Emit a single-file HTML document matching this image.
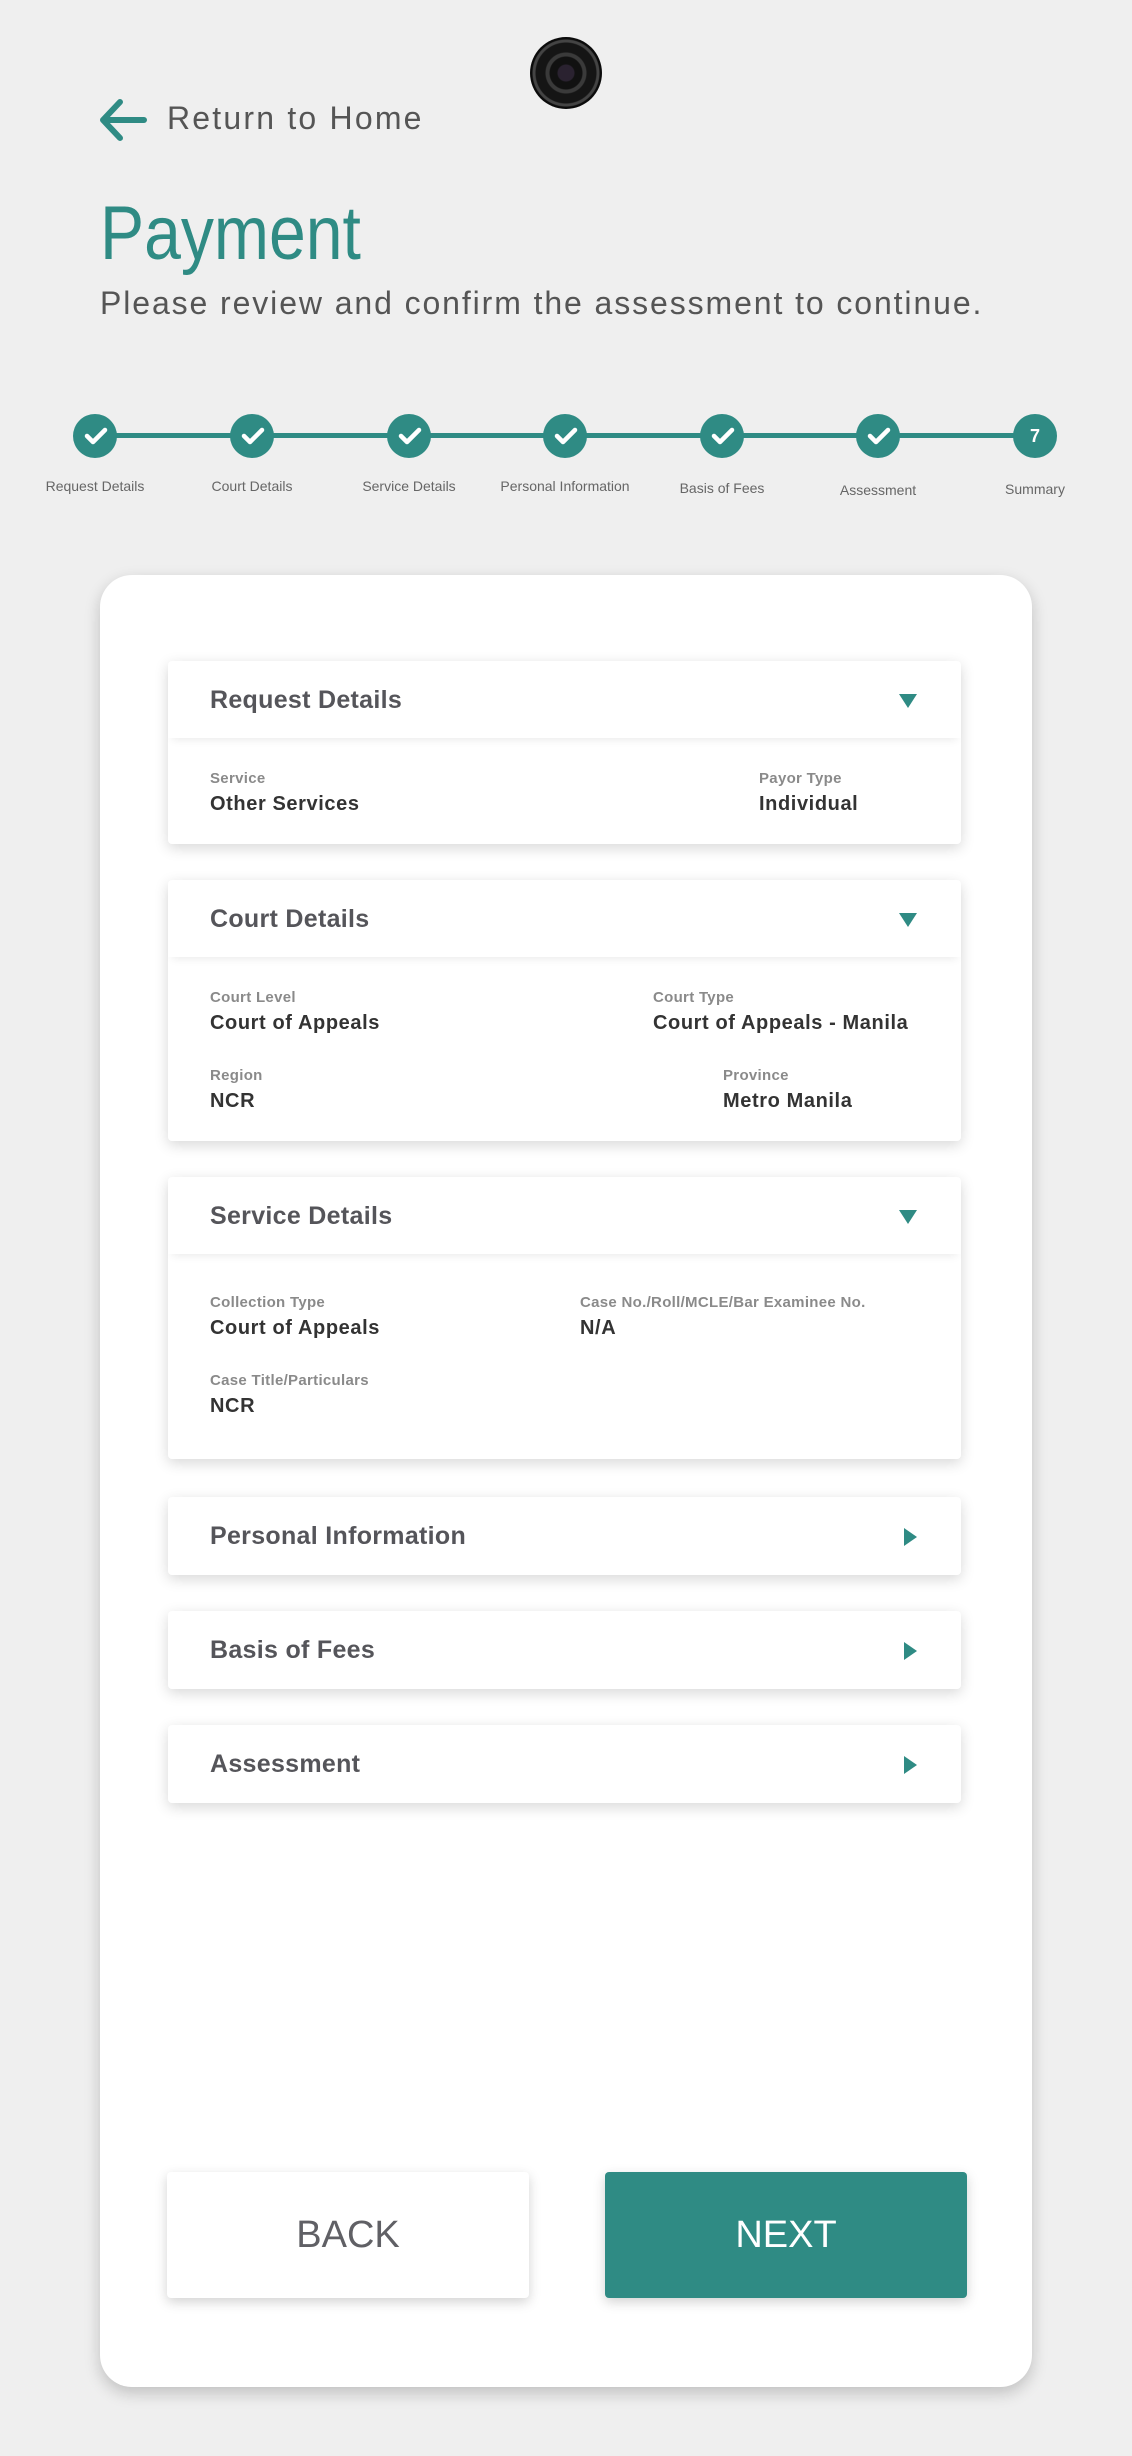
<!DOCTYPE html>
<html><head><meta charset="utf-8"><style>
*{margin:0;padding:0;box-sizing:border-box}
body{width:1132px;height:2456px;background:#efefef;font-family:"Liberation Sans",sans-serif;position:relative;overflow:hidden}
.a{position:absolute}
.teal{color:#2f8b84}
.sec{position:absolute;left:168px;width:793px;background:#fff;border-radius:4px;box-shadow:0 4px 14px rgba(0,0,0,.16)}
.hd{height:77px;position:relative;box-shadow:0 6px 8px -4px rgba(0,0,0,.08)}
.hd span{position:absolute;left:42px;top:25px;font-size:25px;font-weight:bold;color:#55555a;letter-spacing:0.3px}
.dn{position:absolute;right:44px;top:33px;width:0;height:0;border-left:9px solid transparent;border-right:9px solid transparent;border-top:14px solid #2f8b84}
.rt{position:absolute;right:44px;top:31px;width:0;height:0;border-top:9px solid transparent;border-bottom:9px solid transparent;border-left:13px solid #2f8b84}
.lb{position:absolute;font-size:15px;font-weight:bold;color:#8a8a8a;letter-spacing:0.3px}
.vl{position:absolute;font-size:20px;font-weight:bold;color:#333;letter-spacing:0.6px}
.st{position:absolute;top:414px;width:44px;height:44px;border-radius:50%;background:#2f8b84}
.sl{position:absolute;top:478px;width:160px;text-align:center;font-size:14px;color:#666}
</style></head><body>
<div class="a" style="left:530px;top:37px;width:72px;height:72px;border-radius:50%;background:radial-gradient(circle at 50% 50%,#2a2230 0 8px,#111 9px 16px,#3a3a3a 17px 20px,#151515 21px 30px,#444 31px 33px,#0b0b0b 34px)"></div>
<svg class="a" style="left:98px;top:98px" width="50" height="44" viewBox="0 0 50 44"><path d="M22 4 L5 22 L22 40 M5 22 H46" fill="none" stroke="#2f8b84" stroke-width="6" stroke-linecap="round" stroke-linejoin="round"/></svg>
<div class="a" style="left:167px;top:100px;font-size:32px;color:#555;letter-spacing:2.2px">Return to Home</div>
<div class="a teal" style="left:100px;top:190px;font-size:76px;transform:scaleX(0.87);transform-origin:0 0">Payment</div>
<div class="a" style="left:100px;top:285px;font-size:32px;color:#555;letter-spacing:1.9px">Please review and confirm the assessment to continue.</div>
<div class="a" style="left:96px;top:433px;width:940px;height:5px;background:#2f8b84"></div>
<div class="st" style="left:73px"></div><div class="st" style="left:230px"></div><div class="st" style="left:387px"></div><div class="st" style="left:543px"></div><div class="st" style="left:700px"></div><div class="st" style="left:856px"></div><div class="st" style="left:1013px;color:#fff;font-weight:bold;font-size:18px;text-align:center;line-height:44px">7</div>
<svg class="a" style="left:0;top:0" width="1132" height="500"><g fill="none" stroke="#fff" stroke-width="4.5" stroke-linecap="round" stroke-linejoin="round"><path d="M87 436 l6 6 l12 -12"/><path d="M244 436 l6 6 l12 -12"/><path d="M401 436 l6 6 l12 -12"/><path d="M557 436 l6 6 l12 -12"/><path d="M714 436 l6 6 l12 -12"/><path d="M870 436 l6 6 l12 -12"/></g></svg>
<div class="sl" style="left:15px">Request Details</div><div class="sl" style="left:172px">Court Details</div><div class="sl" style="left:329px">Service Details</div><div class="sl" style="left:485px">Personal Information</div><div class="sl" style="left:642px;top:480px">Basis of Fees</div><div class="sl" style="left:798px;top:482px">Assessment</div><div class="sl" style="left:955px;top:481px">Summary</div>
<div class="a" style="left:100px;top:575px;width:932px;height:1812px;background:#fff;border-radius:32px;box-shadow:0 6px 16px rgba(0,0,0,.2)"></div>
<div class="sec" style="top:661px;height:183px"><div class="hd"><span>Request Details</span><i class="dn"></i></div>
<div class="lb" style="left:42px;top:109px">Service</div><div class="vl" style="left:42px;top:132px">Other Services</div>
<div class="lb" style="left:591px;top:109px">Payor Type</div><div class="vl" style="left:591px;top:132px">Individual</div></div>
<div class="sec" style="top:880px;height:261px"><div class="hd"><span>Court Details</span><i class="dn"></i></div>
<div class="lb" style="left:42px;top:109px">Court Level</div><div class="vl" style="left:42px;top:132px">Court of Appeals</div>
<div class="lb" style="left:485px;top:109px">Court Type</div><div class="vl" style="left:485px;top:132px">Court of Appeals - Manila</div>
<div class="lb" style="left:42px;top:187px">Region</div><div class="vl" style="left:42px;top:210px">NCR</div>
<div class="lb" style="left:555px;top:187px">Province</div><div class="vl" style="left:555px;top:210px">Metro Manila</div></div>
<div class="sec" style="top:1177px;height:282px"><div class="hd"><span>Service Details</span><i class="dn"></i></div>
<div class="lb" style="left:42px;top:117px">Collection Type</div><div class="vl" style="left:42px;top:140px">Court of Appeals</div>
<div class="lb" style="left:412px;top:117px">Case No./Roll/MCLE/Bar Examinee No.</div><div class="vl" style="left:412px;top:140px">N/A</div>
<div class="lb" style="left:42px;top:195px">Case Title/Particulars</div><div class="vl" style="left:42px;top:218px">NCR</div></div>
<div class="sec" style="top:1497px;height:78px"><div class="hd" style="box-shadow:none"><span>Personal Information</span><i class="rt"></i></div></div>
<div class="sec" style="top:1611px;height:78px"><div class="hd" style="box-shadow:none"><span>Basis of Fees</span><i class="rt"></i></div></div>
<div class="sec" style="top:1725px;height:78px"><div class="hd" style="box-shadow:none"><span>Assessment</span><i class="rt"></i></div></div>
<div class="a" style="left:167px;top:2172px;width:362px;height:126px;background:#fff;border-radius:4px;box-shadow:0 4px 12px rgba(0,0,0,.18);text-align:center;line-height:126px;font-size:38px;color:#606065">BACK</div>
<div class="a" style="left:605px;top:2172px;width:362px;height:126px;background:#2f8b84;border-radius:4px;box-shadow:0 4px 12px rgba(0,0,0,.18);text-align:center;line-height:126px;font-size:38px;color:#fff">NEXT</div>
</body></html>
